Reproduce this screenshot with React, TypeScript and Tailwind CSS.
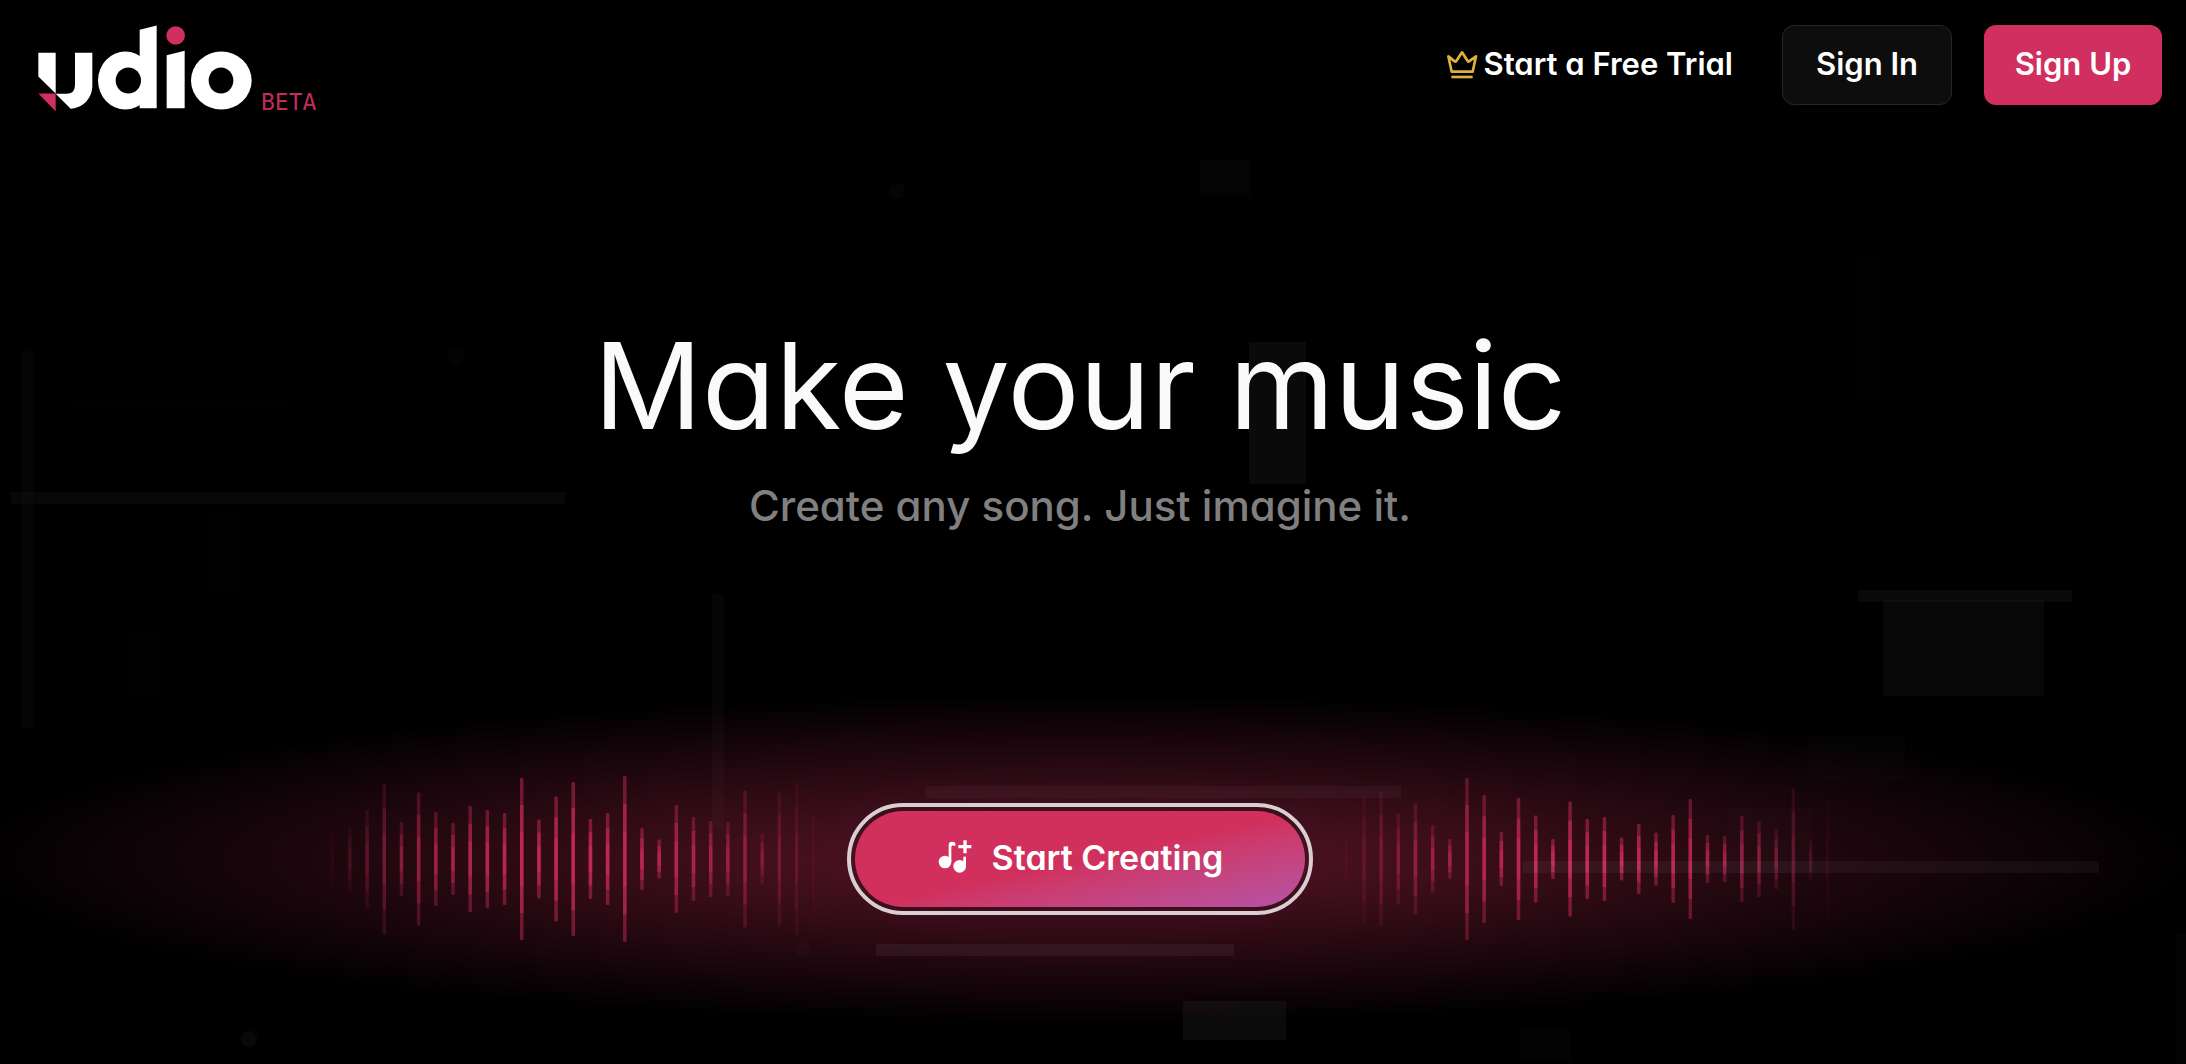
const LEFT_WAVE = [54, 64, 98, 151, 74, 133, 94, 72, 106, 98, 92, 162, 79, 125, 154, 80, 92, 166, 62, 39, 108, 84, 76, 74, 137, 50, 133, 152, 130];
const RIGHT_WAVE = [54, 126, 134, 91, 111, 67, 40, 162, 128, 54, 122, 87, 40, 115, 80, 84, 43, 70, 53, 88, 120, 48, 46, 86, 76, 60, 141, 40, 120];

// x, y, width, height, opacity
const BLOCKS = [
  [1200, 160, 50, 36, 0.014],
  [21, 351, 12, 377, 0.016],
  [75, 399, 216, 12, 0.005],
  [11, 492, 554, 12, 0.026],
  [209, 513, 31, 78, 0.005],
  [130, 635, 31, 62, 0.005],
  [712, 594, 12, 235, 0.02],
  [1249, 342, 57, 142, 0.038],
  [1858, 590, 214, 12, 0.035],
  [1883, 600, 161, 96, 0.028],
  [1807, 736, 98, 45, 0.012],
  [1729, 808, 83, 65, 0.012],
  [1855, 257, 26, 145, 0.003],
  [1523, 861, 576, 12, 0.045],
  [926, 786, 475, 12, 0.035],
  [876, 944, 358, 12, 0.05],
  [1183, 1001, 103, 39, 0.042],
  [1520, 1029, 50, 32, 0.012],
  [2176, 934, 12, 130, 0.01],
];

// cx, cy, opacity
const DOTS = [
  [897, 191, 0.018],
  [456, 357, 0.01],
  [802, 949, 0.015],
  [249, 1039, 0.035],
];

function Backdrop() {
  return (
    <svg className="pointer-events-none absolute inset-0 h-full w-full" viewBox="0 0 2186 1064" preserveAspectRatio="xMidYMid slice" fill="#fff" aria-hidden="true">
      {BLOCKS.map(([x, y, w, h, o]) => (
        <rect key={`${x}-${y}`} x={x} y={y} width={w} height={h} fillOpacity={o} />
      ))}
      {DOTS.map(([x, y, o]) => (
        <circle key={`${x}-${y}`} cx={x} cy={y} r="8" fillOpacity={o} />
      ))}
    </svg>
  );
}

function Wave({ bars }: { bars: number[] }) {
  const step = 481 / (bars.length - 1);
  return (
    <svg className="relative h-[168px] w-[486px] shrink" viewBox="0 0 486 168" fill="#d42c5e" aria-hidden="true">
      {bars.map((h, i) => {
        const x = i * step + 1;
        const o = Math.sin((Math.PI * (i + 0.6)) / (bars.length + 0.2));
        return (
          <g key={i}>
            <rect x={x} y={84 - h / 2} width="3.5" height={h} rx="1" fillOpacity={o * 0.48} />
            <rect x={x} y={84 - h / 3} width="3.5" height={(h * 2) / 3} fillOpacity={o * 0.5} />
            <rect x={x} y={84 - h / 6} width="3.5" height={h / 3} fillOpacity={o * 0.5} />
          </g>
        );
      })}
    </svg>
  );
}

function Logo() {
  return (
    <svg className="h-[87px] w-[214px]" viewBox="115 77 642 260" fill="#fff" role="img" aria-label="udio">
      <path d="M116 160H168V282L116 231Z" />
      <path d="M116 282H168V335Z" fill="#d12f5f" />
      <path d="M226 160H278V258C278 296 252 324 213 328L168 283H200Q226 283 226 256Z" />
      <ellipse cx="377" cy="243" rx="82" ry="87" />
      <path d="M420 91L471 78V326H420Z" />
      <ellipse cx="386" cy="243" rx="38" ry="39" fill="#000" />
      <path d="M501 167L555 154V326H501Z" />
      <circle cx="528" cy="108" r="28" fill="#d12f5f" />
      <ellipse cx="665" cy="243" rx="91" ry="87" />
      <ellipse cx="664" cy="243" rx="37" ry="39" fill="#000" />
    </svg>
  );
}

function Crown() {
  return (
    <svg className="h-[30px] w-8" viewBox="12 34 96 90" fill="none" stroke="#e0b13a" strokeWidth="8" strokeLinejoin="round" strokeLinecap="round" aria-hidden="true">
      <path d="M19 53L29 99H92L102 53L81 68Q79 70 77 67L60 41L43 67Q41 70 38 68Z" />
      <path d="M28 115H92" strokeLinecap="butt" />
    </svg>
  );
}

function MusicPlus() {
  return (
    <svg className="h-9 w-9" viewBox="33 34 108 108" fill="#fff" aria-hidden="true">
      <circle cx="57" cy="103" r="19" />
      <path d="M68 103V52Q68 42 78 42Q84 42 88 46V56Q82 52 78 54Q76 55 76 60V103Z" />
      <circle cx="101" cy="116" r="19" />
      <path d="M112 87H120V116H112Z" />
      <path d="M112 38H122V52H136V62H122V77H112V62H97V52H112Z" />
    </svg>
  );
}

export default function App() {
  return (
    <div className="relative min-h-screen overflow-hidden bg-black font-['Inter',sans-serif] text-white [font-feature-settings:'cv11']">
      <header className="relative z-10 flex items-start justify-between pt-[25px] pr-6 pl-[38px]">
        <a href="#" className="flex items-end">
          <Logo />
          <span className="ml-[9px] font-['DejaVu_Sans_Mono',monospace] text-[23px] leading-5 text-[#c22c58]">BETA</span>
        </a>
        <nav className="flex items-center gap-8">
          <a href="#" className="mr-[17px] flex items-center gap-1.5 text-[31px] font-semibold">
            <Crown />
            <span className="pb-0.5">Start a Free Trial</span>
          </a>
          <button className="h-20 w-[170px] rounded-xl border border-[#262626] bg-[#0d0d0d] pb-0.5 text-[31px] font-semibold">Sign In</button>
          <button className="h-20 w-[178px] rounded-xl bg-[#d12f5f] pb-0.5 text-[31px] font-semibold">Sign Up</button>
        </nav>
      </header>

      <main className="relative flex flex-col items-center pt-[202px] pr-[26px]">
        <h1 className="relative z-10 text-[120px] leading-[144px] text-[#fafafa]">Make your music</h1>
        <p className="relative z-10 mt-5 text-[42px] leading-[56px] font-medium text-[#808080]">Create any song. Just imagine it.</p>
        <section className="relative mt-[161px] flex w-full items-center justify-center gap-[31px] py-20">
          <div className="absolute inset-0 -mr-[26px] bg-[radial-gradient(1120px_164px_at_calc(50%-13px)_50%,rgba(209,47,95,0.43),rgba(209,47,95,0))]" />
          <Wave bars={LEFT_WAVE} />
          <button className="relative shrink-0 rounded-full border-4 border-[#d9cfd2] p-1">
            <span className="flex h-24 w-[450px] items-center justify-center gap-[19px] rounded-full bg-linear-to-br from-[#d12f5c] from-50% to-[#b552a6] pb-1 text-[34px] font-semibold">
              <MusicPlus />
              Start Creating
            </span>
          </button>
          <Wave bars={RIGHT_WAVE} />
        </section>
      </main>
      <Backdrop />
    </div>
  );
}
